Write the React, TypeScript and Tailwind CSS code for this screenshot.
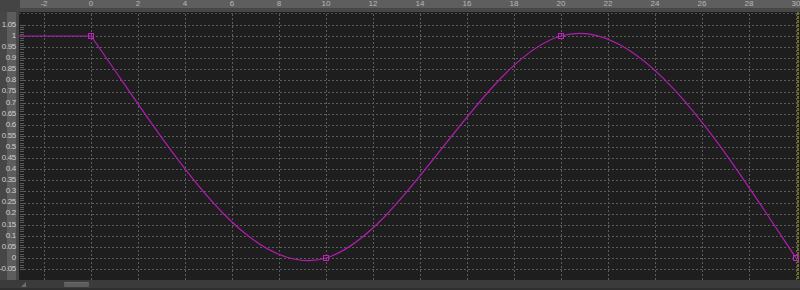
import React from 'react';

// curve editor: time ruler on top, value axis on the left
const PX_PER_UNIT = 23.5;
const PX_PER_VALUE = 222;
const X0 = 72; // x of t=0 inside the plot
const Y0 = 246; // y of v=0 inside the plot

const tx = (t: number) => X0 + t * PX_PER_UNIT;
const vy = (v: number) => Y0 - v * PX_PER_VALUE;

const timeLabels = Array.from({ length: 17 }, (_, i) => -2 + i * 2);
const valueLabels = Array.from({ length: 23 }, (_, i) => Math.round((1.05 - i * 0.05) * 100) / 100);

const keys = [
  { t: 0, v: 1 },
  { t: 10, v: 0 },
  { t: 20, v: 1 },
  { t: 30, v: 0 },
];

// hermite tangents per key (in segment units)
const tangents = [-1.5, 0.32, 0.3, -1.6];

function curvePath() {
  let d = `M0 ${vy(1)} L${tx(0)} ${vy(1)}`;
  for (let i = 0; i < keys.length - 1; i++) {
    const a = keys[i];
    const b = keys[i + 1];
    const dx = (tx(b.t) - tx(a.t)) / 3;
    const c1y = vy(a.v + tangents[i] / 3);
    const c2y = vy(b.v - tangents[i + 1] / 3);
    d += ` C${tx(a.t) + dx} ${c1y} ${tx(b.t) - dx} ${c2y} ${tx(b.t)} ${vy(b.v)}`;
  }
  return d;
}

function Plot() {
  const ticks = Array.from({ length: 111 }, (_, i) => -0.05 + i * 0.01);
  return (
    <svg width={781} height={268} className="block shrink-0">
      <rect width={781} height={268} fill="#1e1e1e" />
      <line x1={0} x2={781} y1={1.5} y2={1.5} stroke="#4e4e4e" strokeDasharray="2 2" shapeRendering="crispEdges" />
      {timeLabels.map((t) => (
        <line
          key={t}
          x1={Math.round(tx(t)) + 0.5}
          x2={Math.round(tx(t)) + 0.5}
          y1={2}
          y2={268}
          stroke="#5c5c5c"
          strokeDasharray="2 2"
          shapeRendering="crispEdges"
        />
      ))}
      {valueLabels.map((v) => (
        <line
          key={v}
          x1={1}
          x2={781}
          y1={Math.round(vy(v)) + 0.5}
          y2={Math.round(vy(v)) + 0.5}
          stroke="#5c5c5c"
          strokeDasharray="2 2"
          shapeRendering="crispEdges"
        />
      ))}
      {ticks.map((v, i) => (
        <line
          key={i}
          x1={1}
          x2={5}
          y1={Math.round(vy(v)) + 0.5}
          y2={Math.round(vy(v)) + 0.5}
          stroke="#5a5a5a"
          shapeRendering="crispEdges"
        />
      ))}
      <line x1={779} x2={779} y1={0} y2={268} stroke="#6f6f24" strokeWidth={2} strokeDasharray="3 1" />
      <path d={curvePath()} fill="none" stroke="#b31bb3" strokeWidth={1.2} />
      {keys.map((k) => (
        <rect
          key={k.t}
          x={Math.round(tx(k.t)) - 2.5}
          y={Math.round(vy(k.v)) - 2.5}
          width={5}
          height={5}
          fill="none"
          stroke="#c21ec2"
          strokeWidth={1}
        />
      ))}
    </svg>
  );
}

export default function App() {
  return (
    <div className="w-[800px] h-[290px] flex flex-col overflow-hidden bg-[#444444] font-['Liberation_Sans',Arial,sans-serif] select-none">
      {/* time ruler */}
      <div className="flex h-[12px] shrink-0">
        <div className="w-[20px] shrink-0 bg-[#444444]" />
        <div className="flex-1 flex flex-col overflow-hidden">
          <div className="h-[8px] flex pl-[0.5px] bg-[#5e5e5e] overflow-hidden">
            {timeLabels.map((t) => (
              <div key={t} className="w-[47px] shrink-0 flex items-center justify-center text-[8px] leading-none text-[#b8b8b8]">
                {t}
              </div>
            ))}
          </div>
          <div className="flex-1 bg-[#474747]" />
        </div>
      </div>

      {/* value axis + plot */}
      <div className="flex h-[268px] shrink-0">
        <div className="w-[19px] shrink-0 flex flex-col pt-[7.3px] pr-[3px] bg-[linear-gradient(to_right,#464646_7px,#5d5d5d_7px,#5d5d5d_16px,#464646_16px)]">
          {valueLabels.map((v) => (
            <div key={v} className="h-[11.1px] shrink-0 flex items-center justify-end text-[8px] leading-none tracking-[-0.3px] text-[#cfcfcf] whitespace-nowrap">
              {v}
            </div>
          ))}
        </div>
        <Plot />
      </div>

      {/* scroll bar */}
      <div className="flex flex-col flex-1 bg-[#3b3b3b]">
        <div className="h-[8px] flex items-center">
          <div className="w-[21px] shrink-0" />
          <svg width={5} height={5} className="shrink-0">
            <path d="M0 5 L5 0 L5 5 Z" fill="#6e6e6e" />
          </svg>
          <div className="w-[38px] shrink-0" />
          <div className="w-[25px] h-[5px] bg-[#5d5d5d] rounded-[1px] border-t border-[#6a6a6a]" />
        </div>
        <div className="flex-1 bg-[#2f2f2f]" />
      </div>
    </div>
  );
}
